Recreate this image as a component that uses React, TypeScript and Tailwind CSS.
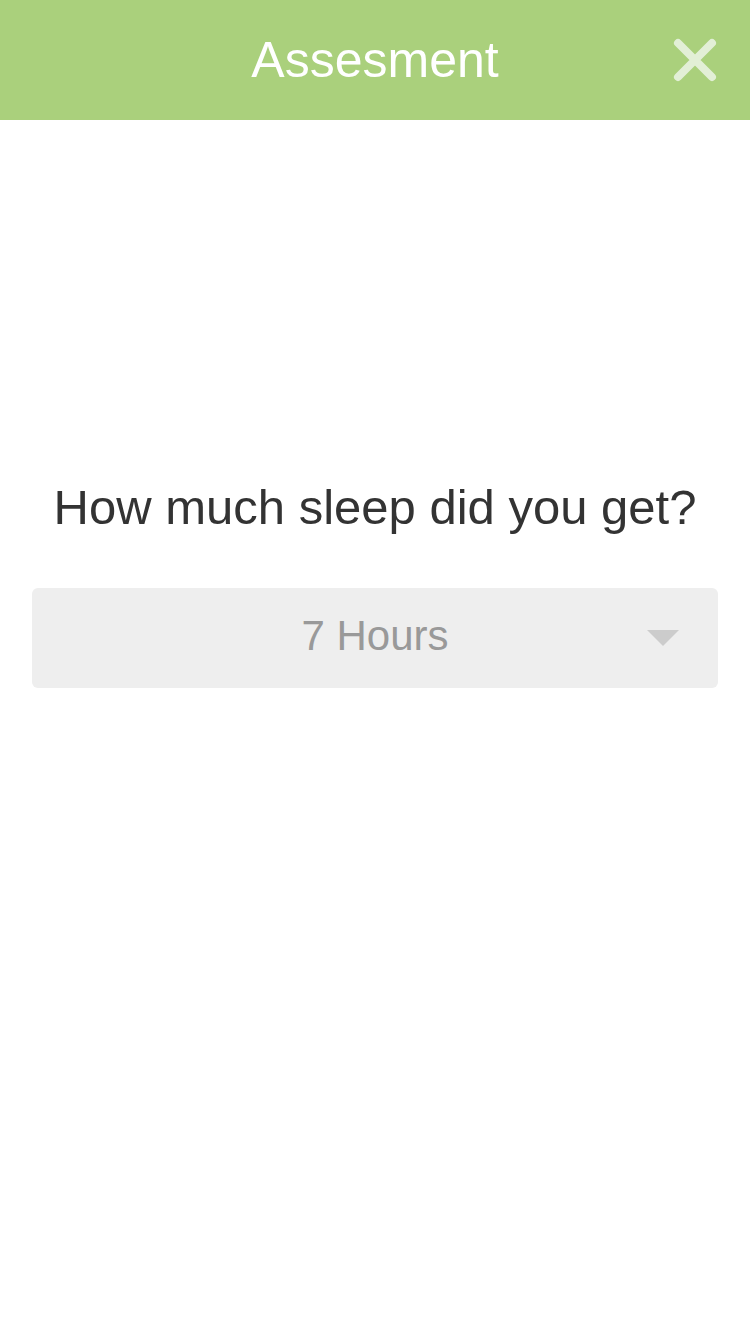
import { useState } from "react";

export default function App() {
	const [hours] = useState(7);

	return (
		<div
			className="min-h-[1334px] w-[750px] bg-white"
			style={{ fontFamily: '"Liberation Sans", Arial, sans-serif' }}
		>
			<header className="relative flex h-[120px] items-center justify-center bg-[#aad07c]">
				<h1 className="text-[50px] leading-none text-white">Assesment</h1>
				<button className="absolute right-[32px] top-[37px] h-[46px] w-[46px] cursor-pointer border-none bg-transparent p-0">
					<svg viewBox="0 0 46 46" className="h-[46px] w-[46px]">
						<path
							d="M6 6 L40 40 M40 6 L6 40"
							stroke="#e2efd6"
							strokeWidth="8"
							strokeLinecap="round"
						/>
					</svg>
				</button>
			</header>

			<main className="flex flex-col items-center pt-[359px]">
				<h2 className="text-[49px] leading-[56px] text-[#333333]">
					How much sleep did you get?
				</h2>

				<div className="relative mt-[53px] flex h-[100px] w-[686px] items-center justify-center rounded-[6px] bg-[#eeeeee]">
					<span className="pb-[5px] text-[42px] leading-none text-[#999999]">
						{hours} Hours
					</span>
					<svg
						viewBox="0 0 32 16"
						className="absolute right-[39px] top-[42px] h-[16px] w-[32px]"
					>
						<path d="M0 0 L32 0 L16 16 Z" fill="#cccccc" />
					</svg>
				</div>
			</main>
		</div>
	);
}
